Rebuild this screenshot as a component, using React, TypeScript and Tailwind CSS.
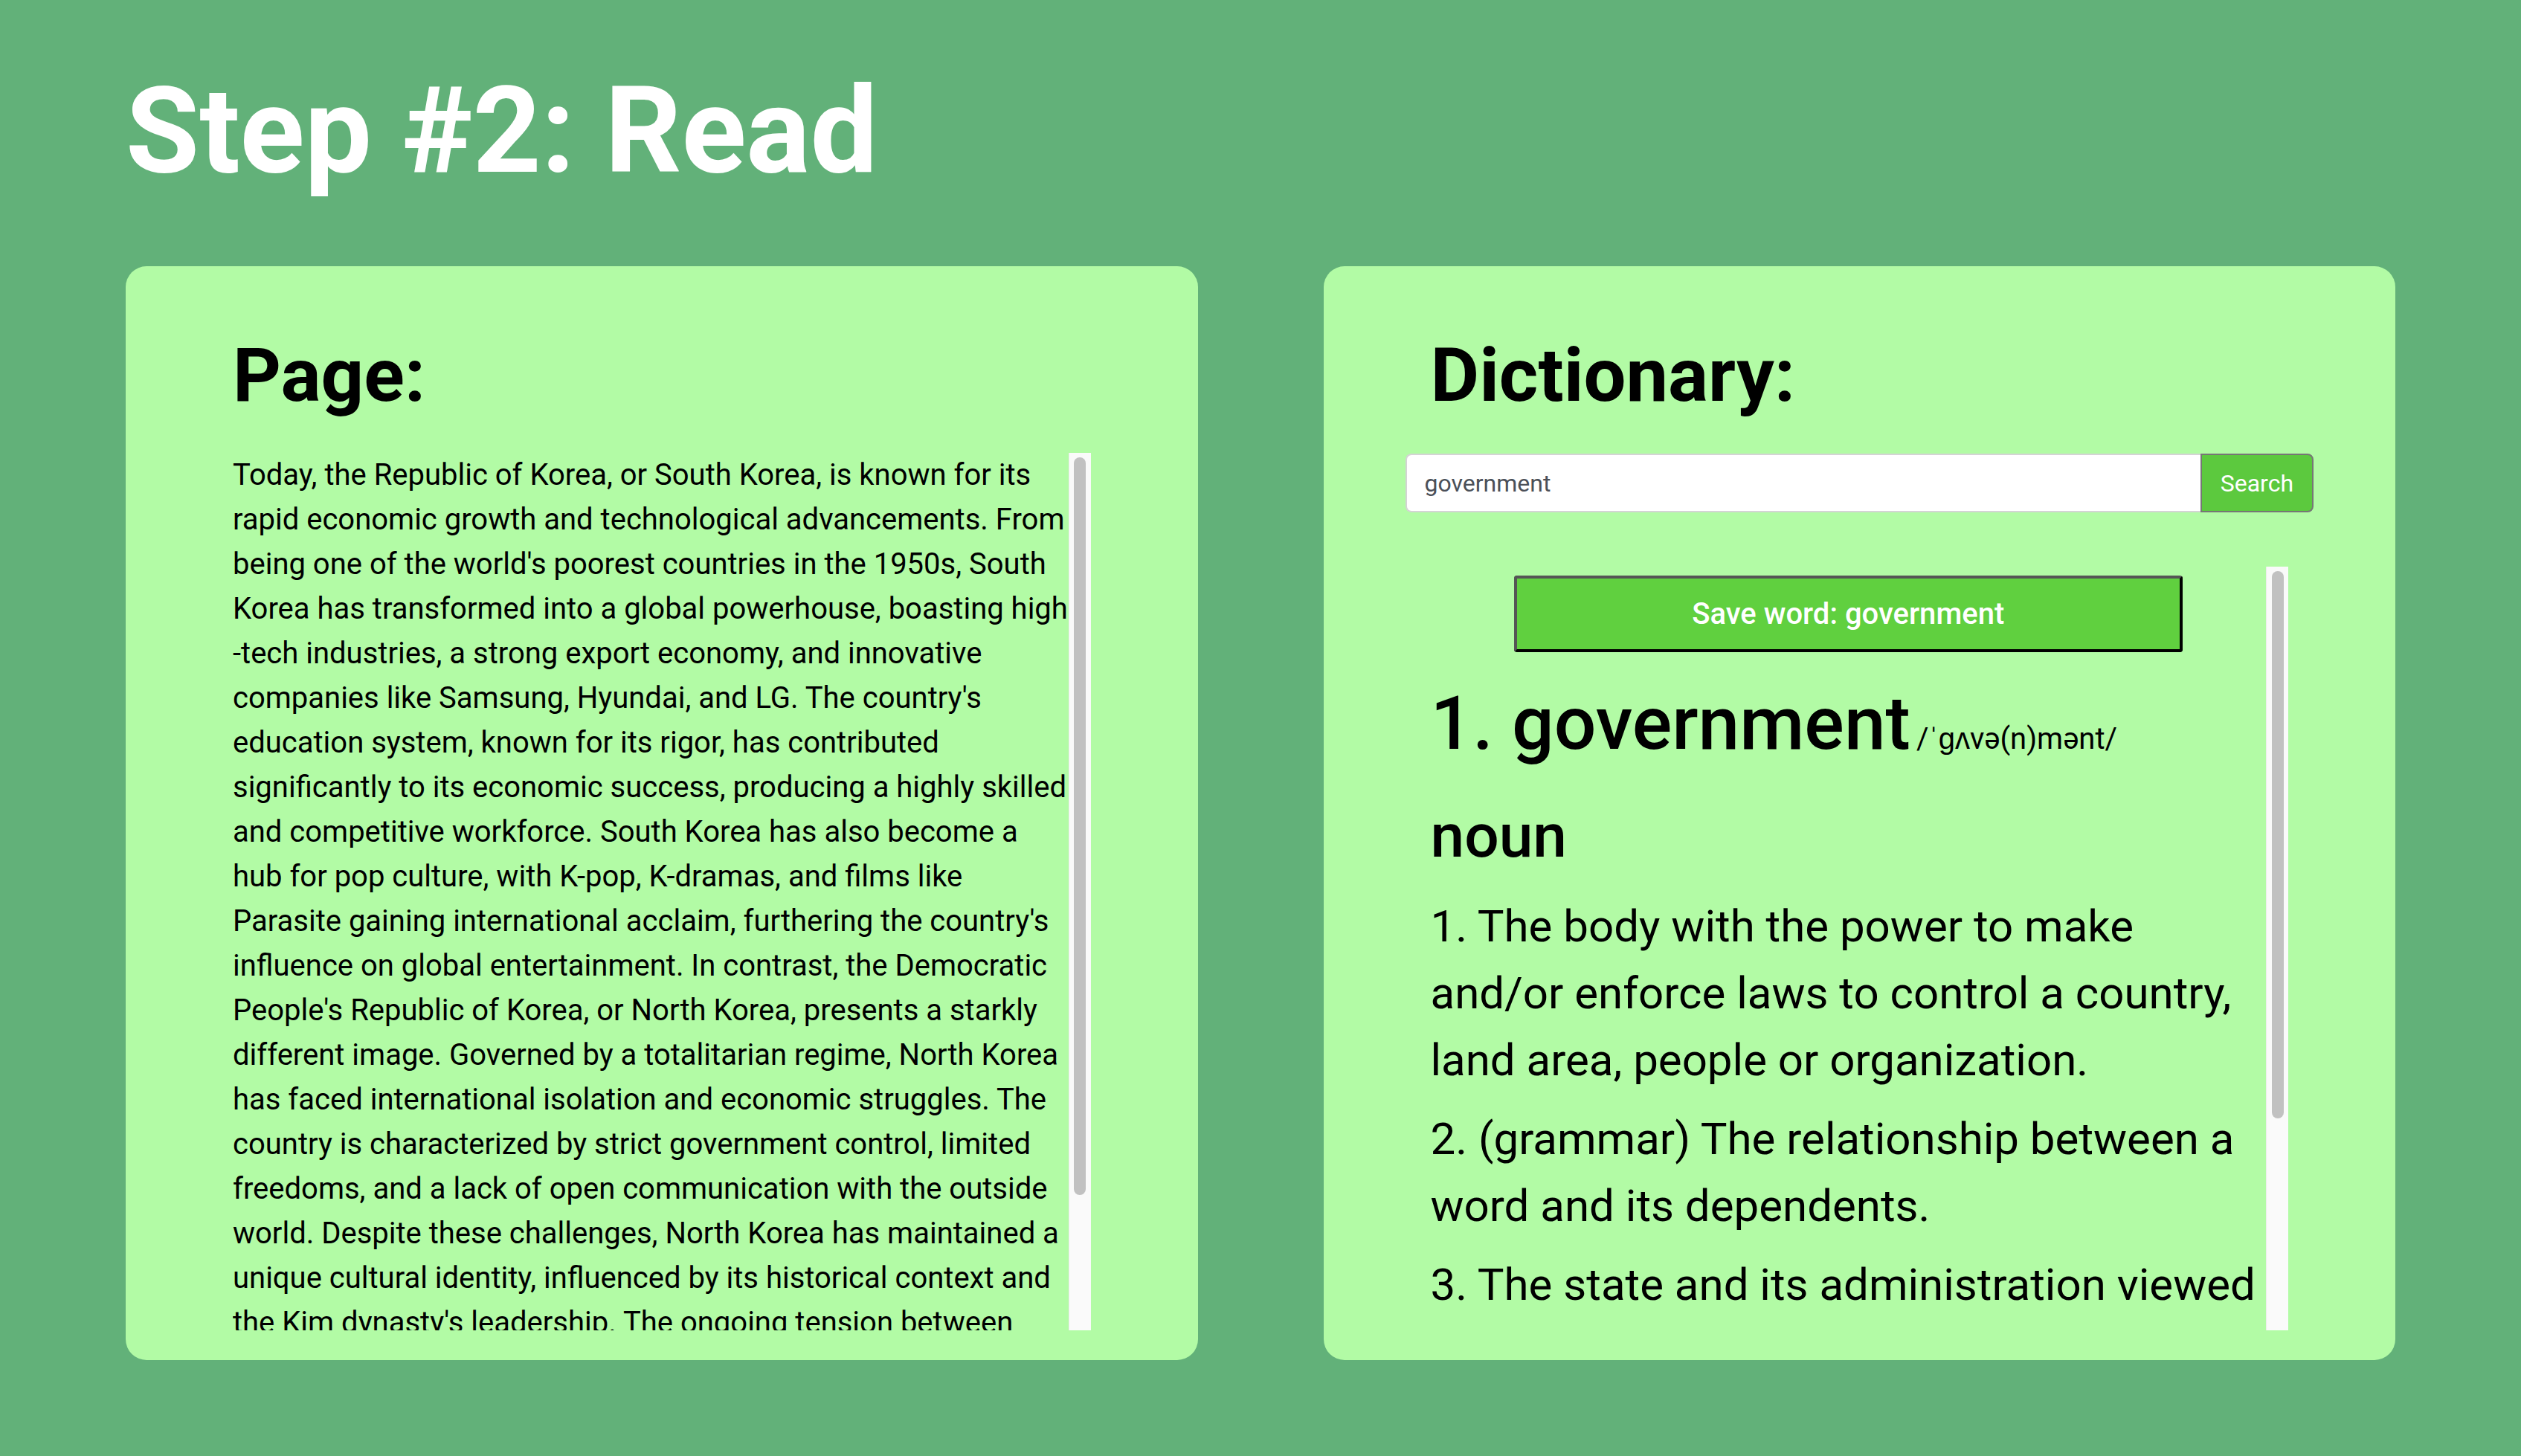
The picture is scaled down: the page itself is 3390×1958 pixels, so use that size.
import React from 'react';

const pageLines = [
    'Today, the Republic of Korea, or South Korea, is known for its',
    'rapid economic growth and technological advancements. From',
    "being one of the world's poorest countries in the 1950s, South",
    'Korea has transformed into a global powerhouse, boasting high',
    '-tech industries, a strong export economy, and innovative',
    "companies like Samsung, Hyundai, and LG. The country's",
    'education system, known for its rigor, has contributed',
    'significantly to its economic success, producing a highly skilled',
    'and competitive workforce. South Korea has also become a',
    'hub for pop culture, with K-pop, K-dramas, and films like',
    "Parasite gaining international acclaim, furthering the country's",
    'influence on global entertainment. In contrast, the Democratic',
    "People's Republic of Korea, or North Korea, presents a starkly",
    'different image. Governed by a totalitarian regime, North Korea',
    'has faced international isolation and economic struggles. The',
    'country is characterized by strict government control, limited',
    'freedoms, and a lack of open communication with the outside',
    'world. Despite these challenges, North Korea has maintained a',
    'unique cultural identity, influenced by its historical context and',
    "the Kim dynasty's leadership. The ongoing tension between",
    'the two Koreas remains one of the most significant geopolitical',
];

const definitions = [
    '1. The body with the power to make and/or enforce laws to control a country, land area, people or organization.',
    '2. (grammar) The relationship between a word and its dependents.',
    '3. The state and its administration viewed as the ruling political power.',
];

function Scrollbar({ thumb }: { thumb: string }) {
    return (
        <div className="w-[30px] shrink-0 bg-[#fafafa] border-l border-[#ececec] pt-[6px]">
            <div className={`mx-auto w-[16px] rounded-full bg-[#c1c1c1] ${thumb}`} />
        </div>
    );
}

export default function App() {
    const word = 'government';

    return (
        <div
            className="min-h-screen bg-[#62b179] px-[169px] pt-[96px] pb-[130px]"
            style={{ fontFamily: 'Roboto, "Liberation Sans", sans-serif' }}
        >
            <h1 className="text-[161px] leading-none font-bold text-white">Step #2: Read</h1>

            <div className="mt-[101px] flex gap-[169px]">
                {/* Page card */}
                <div className="flex-1 h-[1471px] rounded-[28px] bg-[#b2fba5] px-[144px] pt-[96px] pb-[40px] flex flex-col">
                    <h2 className="text-[101px] leading-none font-bold text-black">Page:</h2>
                    <div className="mt-[54px] flex-1 min-h-0 flex">
                        <div className="flex-1 overflow-hidden text-[40px] leading-[60px] text-black">
                            {pageLines.map((line, i) => (
                                <div key={i} className="whitespace-nowrap">{line}</div>
                            ))}
                        </div>
                        <Scrollbar thumb="h-[992px]" />
                    </div>
                </div>

                {/* Dictionary card */}
                <div className="flex-1 h-[1471px] rounded-[28px] bg-[#b2fba5] px-[144px] pt-[96px] pb-[40px] flex flex-col">
                    <h2 className="text-[101px] leading-none font-bold text-black">Dictionary:</h2>

                    <div className="mt-[55px] -mx-[34px] h-[79px] flex">
                        <input
                            readOnly
                            value={word}
                            className="flex-1 min-w-0 bg-white border-2 border-r-0 border-[#d4d4d4] rounded-l-[8px] px-[24px] text-[32px] text-[#4b5058] outline-none"
                        />
                        <button className="bg-[#5cc93e] border-2 border-[#767676] rounded-r-[8px] px-[25px] text-[32px] text-white">
                            Search
                        </button>
                    </div>

                    <div className="mt-[73px] flex-1 min-h-0 flex">
                        <div className="flex-1 overflow-hidden text-black">
                            <button className="mt-[12px] mx-auto block w-4/5 h-[103px] bg-[#60d03f] border-4 border-t-[#555555] border-l-[#555555] border-r-black border-b-black rounded-[4px] text-[40px] font-medium text-white">
                                Save word: {word}
                            </button>
                            <h3 className="mt-[46px] text-[100px] leading-none font-medium">
                                1. {word}
                                <span className="ml-[8px] text-[40px] font-normal">/ˈɡʌvə(n)mənt/</span>
                            </h3>
                            <div className="mt-[60px] text-[82px] leading-none font-medium">noun</div>
                            <div className="mt-[36px] flex flex-col gap-[16px] text-[60px] leading-[90px]">
                                {definitions.map((d, i) => (
                                    <p key={i}>{d}</p>
                                ))}
                            </div>
                        </div>
                        <Scrollbar thumb="h-[736px]" />
                    </div>
                </div>
            </div>
        </div>
    );
}
